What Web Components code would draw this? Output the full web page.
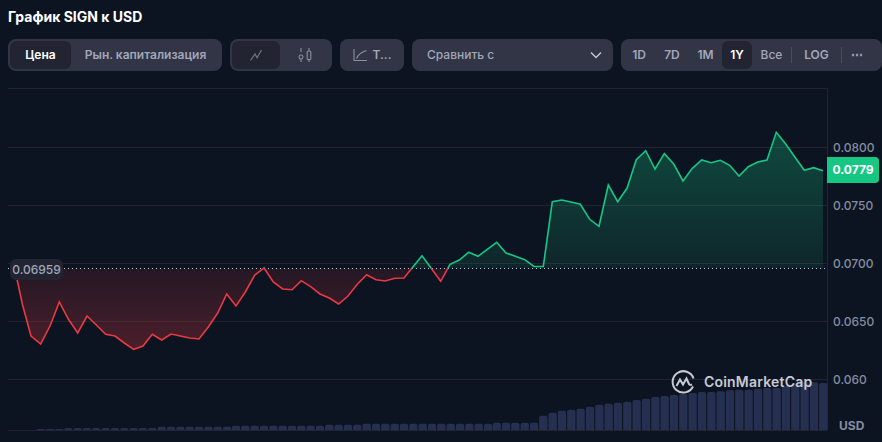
<!DOCTYPE html>
<html><head><meta charset="utf-8">
<style>
html,body{margin:0;padding:0;background:#0d1421;overflow:hidden}
body{width:882px;height:442px;font-family:Inter,"Liberation Sans",sans-serif}
</style></head><body>
<price-page>
<chart-title slot="title">График SIGN к USD</chart-title>
<chart-toolbar slot="toolbar"></chart-toolbar>
<price-chart slot="chart"></price-chart>
</price-page>
<script>
class PricePage extends HTMLElement{constructor(){super();this.attachShadow({mode:'open'}).innerHTML=`<style>
:host{display:flex;flex-direction:column;width:882px;height:442px;overflow:hidden}
.t{padding:8px 0 0 8px;height:23px;box-sizing:content-box}
.b{padding:8px 0 0 8px}
.c{margin-top:17px}
</style><div class="t"><slot name="title"></slot></div><div class="b"><slot name="toolbar"></slot></div><div class="c"><slot name="chart"></slot></div>`}}
class ChartTitle extends HTMLElement{constructor(){super();this.attachShadow({mode:'open'}).innerHTML=`<style>
:host{display:block;font:700 14px/17px Inter,"Liberation Sans",sans-serif;color:#fff}
</style><slot></slot>`}}
class SegGroup extends HTMLElement{constructor(){super();this.attachShadow({mode:'open'}).innerHTML=`<style>
:host{display:flex;align-items:stretch;height:32px;box-sizing:border-box;padding:2px;background:#323546;border-radius:8px;flex:none}
</style><slot></slot>`}}
class SegItem extends HTMLElement{constructor(){super();this.attachShadow({mode:'open'}).innerHTML=`<style>
:host{display:flex;align-items:center;justify-content:center;box-sizing:border-box;border-radius:6px;font:600 12px/16px Inter,"Liberation Sans",sans-serif;color:#a1a7bb;white-space:nowrap;flex:none}
:host([active]){background:#222531;color:#fff}
svg{display:block}
</style><slot></slot>`}}
class ChartToolbar extends HTMLElement{constructor(){super();this.attachShadow({mode:'open'}).innerHTML=`<style>
:host{display:flex;gap:8px;width:874px;align-items:stretch}
.sel{display:flex;align-items:center;justify-content:space-between;box-sizing:border-box;width:201px;height:32px;background:#323546;border-radius:8px;padding:0 9px 0 15px;font:500 12px/16px Inter,"Liberation Sans",sans-serif;color:#a1a7bb;flex:none}
.sep{width:1px;height:16px;background:#4a4d5e;align-self:center;flex:none}
svg{display:block}
</style>
<seg-group><seg-item active style="width:61px">Цена</seg-item><seg-item style="width:149px">Рын. капитализация</seg-item></seg-group>
<seg-group>
<seg-item active style="width:48px"><svg width="16" height="14" viewBox="0 0 16 14" fill="none" stroke="#6f7485" stroke-width="1.2"><path d="M2.5 12.5 7 6l2 3.8L13.5 2"/></svg></seg-item>
<seg-item style="width:50px"><svg width="16" height="16" viewBox="0 0 16 16" fill="none" stroke="#8a8fa3" stroke-width="1.1"><path d="M4 1v4M4 12v3M12 1v3M12 13v2"/><rect x="2.2" y="8" width="3.6" height="4" rx="1.6"/><rect x="10.2" y="4" width="3.6" height="8.500" rx="1"/></svg></seg-item>
</seg-group>
<seg-group style="width:64px;padding:0"><seg-item style="width:64px;gap:5px"><svg width="15" height="14" viewBox="0 0 15 14" fill="none" stroke="#8a8fa3" stroke-width="1.1"><path d="M1 1v11.500h13"/><path d="M3.500 10.500c1.500-4 4-6 10-8"/></svg><span>T...</span></seg-item></seg-group>
<div class="sel"><span>Сравнить с</span><svg width="16" height="16" viewBox="0 0 16 16" fill="none" stroke="#c4c7d2" stroke-width="1.4"><path d="M3 5.500l5 5 5-5"/></svg></div>
<seg-group style="width:261px;gap:0">
<seg-item style="width:32px">1D</seg-item><seg-item style="width:34px">7D</seg-item><seg-item style="width:33px">1M</seg-item><seg-item active style="width:30px">1Y</seg-item><seg-item style="width:39px;font-weight:500">Все</seg-item><span class="sep"></span><seg-item style="width:49px">LOG</seg-item><span class="sep"></span><seg-item style="width:30px">⋯</seg-item>
</seg-group>`}}
const PTS=[[15,270],[22.600,305],[31,336],[40.700,344],[50,326],[59.300,302],[68.300,319],[77.700,333],[87,316],[96.300,325],[105.700,334.300],[115,336],[124.300,343],[133.700,349.300],[143,346],[152.300,334.300],[161.700,340],[171,334],[180.300,336],[189.700,338],[199,339],[208.300,327],[217.700,313],[226.700,294],[236,306],[245.300,292],[254.700,275],[264,268],[273.300,282],[282.700,289],[292,289.700],[301.300,280.700],[310.700,286.700],[320,294],[329.300,298],[338.700,304],[348,296],[357.300,284.300],[366.700,274.700],[376,279.700],[385.300,281],[394.700,278.300],[404,278],[422,255.700],[440.700,281.300],[450,264.300],[459.300,260],[468.700,252.300],[478,256.300],[487.300,249.300],[496.700,242.300],[506,253],[515.300,256.300],[524.700,259.700],[534,266.500],[543.300,266.500],[552.300,201.700],[561.700,200],[571,202],[580.300,204.300],[589.700,219.300],[599,226.300],[608.300,185],[617.700,201.700],[627,188.300],[636.300,159.700],[645.700,150.700],[655,169],[664.300,153.700],[673.700,164],[683,181],[692.300,168.300],[701.700,160],[711,162.700],[720.300,160.300],[729.700,165.300],[739,176],[748.300,166.700],[757.700,162],[767,160],[776.300,132.300],[785.700,144],[795,157.300],[804.300,170.300],[813.700,167.700],[823,170.700]];
const BASE=268.3;
const VOL=[[40.7,1],[50,1],[59.3,1]];
function addV(from,to,h){for(let x=from;x<to;x+=9.333)VOL.push([x,h])}
addV(68.3,160,2);addV(161.7,235,3.3);addV(236,325,4.3);addV(329.300,365,5.3);addV(366.7,495,6.3);addV(496.7,540,7.3);
[14.3,17.3,19.3,20.3,21.3,23.3,25.3,26.3,27.3,28.3,30,31.3,33,34,35,36,37,38,38,38.7,39.700,40.300,40.300,41.300,42,42,44,46,48,47.700,47].forEach((h,i)=>VOL.push([543.3+i*9.333,h]));
function bar(x,h){const w=8.3,l=x-w/2,r=Math.min(h,2);return `<path d="M${l} 430V${430-h+r}Q${l} ${430-h} ${l+r} ${430-h}H${l+w-r}Q${l+w} ${430-h} ${l+w} ${430-h+r}V430Z"/>`}
function splitPts(){const red=[],green=[];let cur=null,seg=[];const out=[];
for(let i=0;i<PTS.length;i++){const p=PTS[i],side=p[1]>BASE?'r':'g';
 if(cur===null){cur=side;seg=[p];continue}
 if(side!==cur){const q=PTS[i-1],t=(BASE-q[1])/(p[1]-q[1]),c=[q[0]+t*(p[0]-q[0]),BASE];seg.push(c);out.push([cur,seg]);seg=[c,p];cur=side}else seg.push(p)}
out.push([cur,seg]);return out}
class PriceChart extends HTMLElement{constructor(){super();
const segs=splitPts();
const fills=segs.map(([s,a])=>`<path d="M${a[0][0]} ${BASE}L${a.map(p=>p.join(' ')).join('L')}L${a[a.length-1][0]} ${BASE}Z" fill="url(#${s})"/>`).join('');
const lines=segs.map(([s,a])=>`<polyline points="${a.map(p=>p.join(',')).join(' ')}" fill="none" stroke="${s==='r'?'#ea3943':'#16c784'}" stroke-width="1.600" stroke-linejoin="miter"/>`).join('');
const grid=[147.5,205.5,263.5,321.5,379.5].map(y=>`<path d="M8 ${y}H827" stroke="#222531"/>`).join('');
const labels=[['0.0800',152],['0.0750',210],['0.0700',267.500],['0.0650',325.500],['0.060',383.500]].map(([t,y])=>`<text x="833" y="${y}">${t}</text>`).join('');
this.attachShadow({mode:'open'}).innerHTML=`<style>
:host{display:block;position:relative;width:882px;height:354px;margin-top:0}
svg{position:absolute;left:0;top:-88px;display:block}
text{font:500 12px Inter,"Liberation Sans",sans-serif;fill:#858ca2}
.tag{position:absolute;box-sizing:border-box;display:flex;align-items:center;justify-content:center;font:500 12px/16px Inter,"Liberation Sans",sans-serif}
.base{left:10px;top:171px;width:53px;height:21px;border-radius:6px;background:#222531;color:#a1a7bb}
.last{left:827px;top:69px;width:52px;height:26px;border-radius:0 4px 4px 0;background:#16c784;color:#fff;font-weight:700}
.usd{position:absolute;left:839px;top:330px;font:700 12px/16px Inter,"Liberation Sans",sans-serif;color:#858ca2}
.cmc{position:absolute;left:671px;top:281px;display:flex;align-items:center;gap:8px;font:600 14px/24px Inter,"Liberation Sans",sans-serif;color:#c7cad3;letter-spacing:.2px}
.cmc svg{position:static}
</style>
<svg width="882" height="442" viewBox="0 0 882 442">
<defs>
<linearGradient id="g" gradientUnits="userSpaceOnUse" x1="0" y1="132" x2="0" y2="268"><stop offset="0" stop-color="#16c784" stop-opacity=".3"/><stop offset="1" stop-color="#16c784" stop-opacity=".1"/></linearGradient>
<linearGradient id="r" gradientUnits="userSpaceOnUse" x1="0" y1="268" x2="0" y2="350"><stop offset="0" stop-color="#ea3943" stop-opacity=".1"/><stop offset="1" stop-color="#ea3943" stop-opacity=".28"/></linearGradient>
</defs>
<path d="M8 88.500H827.500V430" fill="none" stroke="#222531"/>
${grid}
<path d="M8 430.500H827" stroke="#222531"/>
${fills}
<g fill="#252f50">${VOL.map(v=>bar(v[0],v[1])).join('')}</g>
<path d="M8 268.500H827" stroke="#c4c7d2" stroke-width="1" stroke-dasharray="1 3"/>
${lines}
${labels}
</svg>
<div class="tag base">0.06959</div>
<div class="tag last">0.0779</div>
<div class="usd">USD</div>
<div class="cmc"><svg width="25" height="25" viewBox="0 0 25 25" fill="none" stroke="#c7cad3" stroke-width="2"><path d="M22 17.500a10.700 10.700 0 1 1 .5-8"/><path d="M5.500 17l3.500-6.500 3 5 3.500-6 2.500 5.500c.5 1 2 1 3 .5"/></svg><span>CoinMarketCap</span></div>`}}
customElements.define('seg-group',SegGroup);customElements.define('seg-item',SegItem);
customElements.define('chart-title',ChartTitle);customElements.define('chart-toolbar',ChartToolbar);
customElements.define('price-chart',PriceChart);customElements.define('price-page',PricePage);
</script></body></html>
